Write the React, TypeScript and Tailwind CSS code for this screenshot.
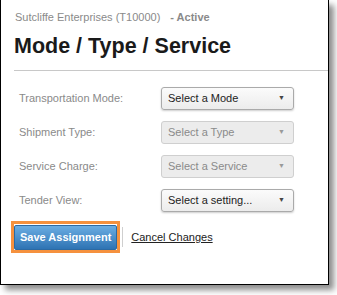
const rows = [
  { label: 'Transportation Mode:', value: 'Select a Mode', enabled: true },
  { label: 'Shipment Type:', value: 'Select a Type', enabled: false },
  { label: 'Service Charge:', value: 'Select a Service', enabled: false },
  { label: 'Tender View:', value: 'Select a setting...', enabled: true },
];

const App = () => {
  return (
    <div className="w-[337px] h-[295px] bg-white font-['Liberation_Sans',Arial,sans-serif] overflow-hidden">
      <div className="w-[329px] h-[285px] bg-white border-x border-b border-black shadow-[5px_5px_6px_rgba(0,0,0,0.45)]">
        <div className="pt-[10px] pl-[14px] text-[11px] leading-[15px] text-[#8a8a8a]">
          Sutcliffe Enterprises (T10000)
          <span className="ml-[10px] font-bold">- Active</span>
        </div>
        <h1 className="pl-[13px] mt-[8px] text-[21.5px] leading-[26px] font-bold text-[#1a1a1a]">
          Mode / Type / Service
        </h1>
        <div className="ml-[13px] mt-[11px] h-px bg-[#c8c8c8]" />

        <div className="mt-[16px] flex flex-col gap-[11px]">
          {rows.map((row) => (
            <div key={row.label} className="flex items-center h-[23px] pl-[18px]">
              <span className="w-[142px] text-[11px] text-[#8a8a8a]">{row.label}</span>
              <div
                className={
                  row.enabled
                    ? 'flex items-center justify-between w-[133px] h-[23px] pl-[6px] pr-[8px] rounded-[3px] border border-[#aaaaaa] bg-gradient-to-b from-[#fbfbfb] to-[#ececec] shadow-[0_1px_2px_rgba(0,0,0,0.2)] text-[11px] text-[#222]'
                    : 'flex items-center justify-between w-[133px] h-[23px] pl-[6px] pr-[8px] rounded-[3px] border border-[#cfcfcf] bg-[#ececec] text-[11px] text-[#8a8a8a]'
                }
              >
                <span>{row.value}</span>
                <span className={row.enabled ? 'text-[7px] text-[#444]' : 'text-[7px] text-[#999]'}>▼</span>
              </div>
            </div>
          ))}
        </div>

        <div className="mt-[9px] ml-[10px] flex items-center">
          <div className="border-[3px] border-[#f5913e]">
            <button className="h-[25px] px-[5px] rounded-[2px] border border-[#2c6aa3] bg-gradient-to-b from-[#6aade3] to-[#2e73b3] text-white text-[11px] font-bold">
              Save Assignment
            </button>
          </div>
          <div className="ml-[2px] w-px h-[20px] bg-[#cfcfcf]" />
          <a className="ml-[8px] text-[11px] text-[#222] underline">Cancel Changes</a>
        </div>
      </div>
    </div>
  );
};

export default App;
